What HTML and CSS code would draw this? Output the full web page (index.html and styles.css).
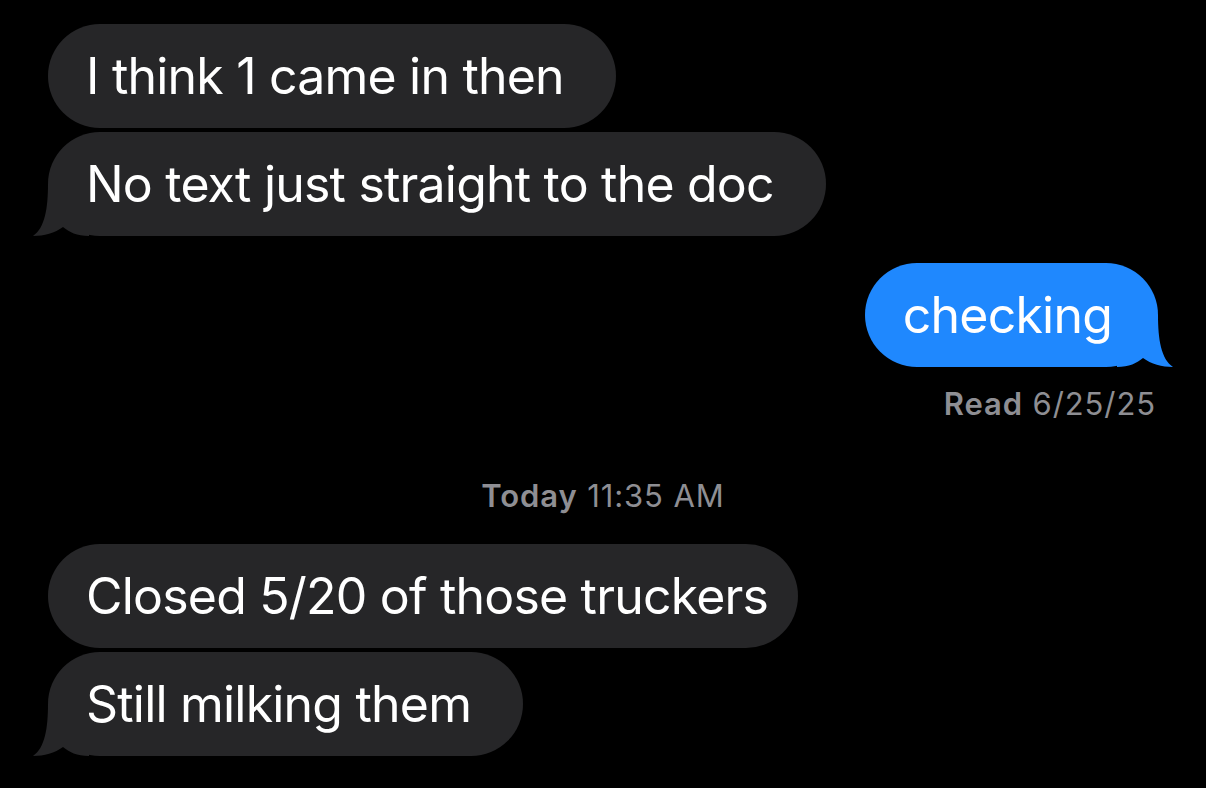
FILE: index.html
```html
<!DOCTYPE html>
<html>
<head>
<meta charset="utf-8">
<link rel="stylesheet" href="styles.css">
</head>
<body>
<div class="thread">
  <div class="row in">
    <div class="bubble gray pr52">I think 1 came in then</div>
  </div>
  <div class="row in">
    <div class="bubble gray pr52 tailed">No text just straight to the doc
      <svg class="tail tail-left" viewBox="0 0 56 52" width="56" height="52"><path d="M15,0 C15,24 12,44 0,52 C11,52 22,49 30,43 C36,48 44,52 56,52 L56,0 Z"/></svg>
    </div>
  </div>
  <div class="row out">
    <div class="bubble blue pr46 tailed">checking
      <svg class="tail tail-right" viewBox="0 0 56 52" width="56" height="52"><path d="M15,0 C15,24 12,44 0,52 C11,52 22,49 30,43 C36,48 44,52 56,52 L56,0 Z"/></svg>
    </div>
  </div>
  <div class="receipt"><b>Read</b> 6/25/25</div>
  <div class="stamp"><b>Today</b> 11:35 AM</div>
  <div class="row in">
    <div class="bubble gray pr30">Closed 5/20 of those truckers</div>
  </div>
  <div class="row in">
    <div class="bubble gray pr52 tailed">Still milking them
      <svg class="tail tail-left" viewBox="0 0 56 52" width="56" height="52"><path d="M15,0 C15,24 12,44 0,52 C11,52 22,49 30,43 C36,48 44,52 56,52 L56,0 Z"/></svg>
    </div>
  </div>
</div>
</body>
</html>
```
FILE: styles.css
```css
html, body {
  margin: 0;
  padding: 0;
  background: #000;
}
body {
  width: 1206px;
  height: 788px;
  overflow: hidden;
  font-family: Inter, "Liberation Sans", sans-serif;
}
.thread {
  display: flex;
  flex-direction: column;
  padding: 24px 48px 0 48px;
}
.row {
  display: flex;
  margin-bottom: 4px;
}
.row.in { justify-content: flex-start; }
.row.out { justify-content: flex-end; margin-top: 23px; }
.bubble {
  position: relative;
  height: 104px;
  box-sizing: border-box;
  border-radius: 52px;
  padding: 0 38px;
  display: flex;
  align-items: center;
  font-size: 50px;
  color: #fff;
  letter-spacing: -0.8px;
  white-space: nowrap;
}
.bubble.pr52 { padding-right: 52px; }
.bubble.pr46 { padding-right: 46px; }
.bubble.pr30 { padding-right: 30px; }
.gray { background: #262628; }
.blue { background: #1f88fe; }
.tail {
  position: absolute;
  bottom: 0;
}
.gray .tail { fill: #262628; }
.blue .tail { fill: #1f88fe; }
.tail-left { left: -15px; }
.tail-right { right: -15px; transform: scaleX(-1); }
.receipt {
  align-self: flex-end;
  margin-right: 2px;
  margin-top: 14px;
  font-size: 31px;
  color: #8e8e93;
  letter-spacing: 0.9px;
}
.receipt b, .stamp b { font-weight: 600; }
.stamp {
  align-self: center;
  margin: 55px 0 30px 0;
  font-size: 31px;
  color: #8e8e93;
  letter-spacing: 0.9px;
}
```
